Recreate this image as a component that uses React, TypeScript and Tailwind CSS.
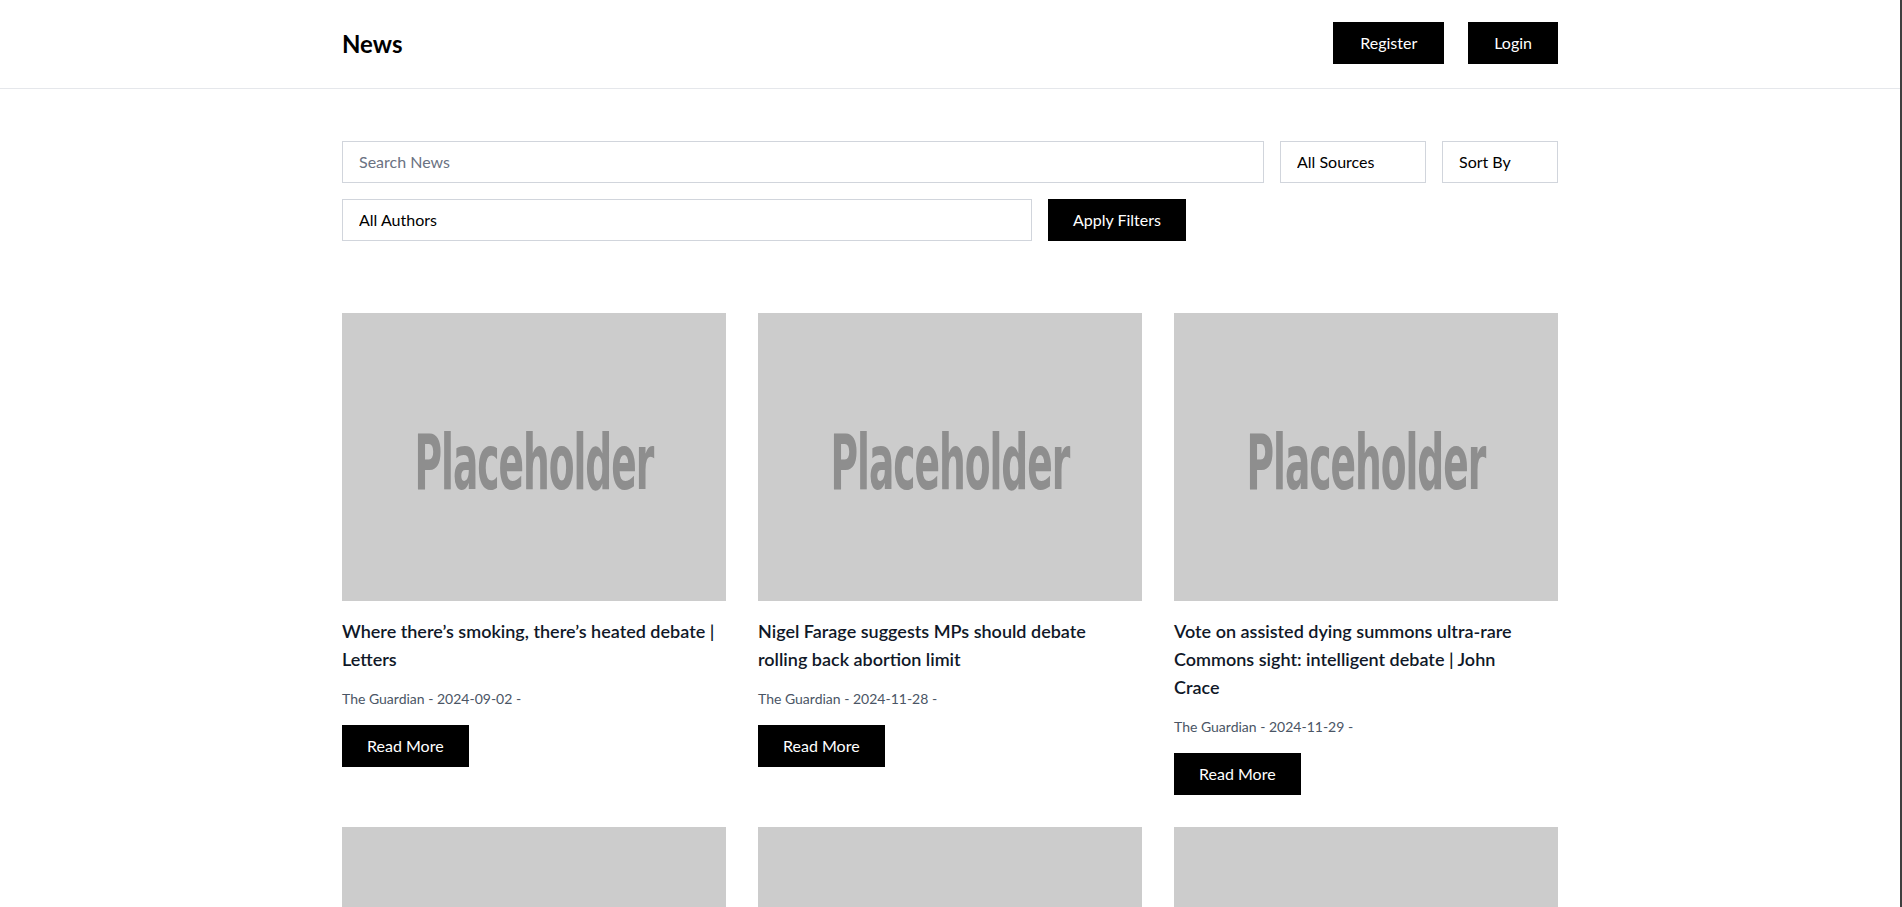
const articles = [
  {
    lines: ["Where there’s smoking, there’s heated debate |", "Letters"],
    source: "The Guardian",
    date: "2024-09-02",
  },
  {
    lines: ["Nigel Farage suggests MPs should debate", "rolling back abortion limit"],
    source: "The Guardian",
    date: "2024-11-28",
  },
  {
    lines: ["Vote on assisted dying summons ultra-rare", "Commons sight: intelligent debate | John", "Crace"],
    source: "The Guardian",
    date: "2024-11-29",
  },
  {
    lines: ["The week in politics: what the budget", "debate means for you"],
    source: "The Guardian",
    date: "2024-10-31",
  },
  {
    lines: ["Debate over school phone bans heats up", "across the country"],
    source: "The Guardian",
    date: "2024-09-15",
  },
  {
    lines: ["Heated debate as council votes on new", "housing plans"],
    source: "The Guardian",
    date: "2024-11-12",
  },
];

function Placeholder() {
  return (
    <div className="h-72 w-full bg-[#cccccc] flex items-center justify-center overflow-hidden">
      <span className="pt-3 text-[76px] font-bold leading-none text-[#8e8e8e] scale-x-[0.55] font-['Liberation_Sans_Narrow','DejaVu_Sans_Condensed',sans-serif] tracking-tight">
        Placeholder
      </span>
    </div>
  );
}

export default function App() {
  return (
    <div className="min-h-screen bg-white text-black border-r-2 border-[#3f3f3f] font-['Lato','Open_Sans',sans-serif]">
      <header className="border-b border-gray-200">
        <div className="mx-auto max-w-7xl px-8 h-[88px] flex items-center justify-between">
          <h1 className="text-2xl font-bold">News</h1>
          <div className="flex gap-6 -mt-0.5">
            <button className="bg-black text-white px-[27px] py-[9px] text-base leading-6">Register</button>
            <button className="bg-black text-white px-[26px] py-[9px] text-base leading-6">Login</button>
          </div>
        </div>
      </header>

      <main className="mx-auto max-w-7xl px-8 pt-[52px]">
        {/* Filters */}
        <div className="flex flex-col gap-4">
          <div className="flex gap-4">
            <input
              type="text"
              placeholder="Search News"
              className="flex-1 border border-gray-300 px-4 py-2 text-base leading-6 placeholder:text-gray-500 outline-none"
            />
            <select className="appearance-none w-[146px] border border-gray-300 px-4 py-2 text-base leading-6 bg-white">
              <option>All Sources</option>
            </select>
            <select className="appearance-none w-[116px] border border-gray-300 px-4 py-2 text-base leading-6 bg-white">
              <option>Sort By</option>
            </select>
          </div>
          <div className="flex gap-4">
            <select className="appearance-none w-[690px] border border-gray-300 px-4 py-2 text-base leading-6 bg-white">
              <option>All Authors</option>
            </select>
            <button className="bg-black text-white px-[25px] py-[9px] text-base leading-6">Apply Filters</button>
          </div>
        </div>

        {/* Articles */}
        <div className="mt-[72px] grid grid-cols-3 gap-8 pb-12">
          {articles.map((a) => (
            <div key={a.date} className="flex flex-col items-start">
              <Placeholder />
              <h2 className="mt-4 text-lg leading-7 font-semibold text-gray-900">
                {a.lines.map((l, i) => (
                  <span key={i} className="block">
                    {l}
                  </span>
                ))}
              </h2>
              <p className="mt-4 text-sm leading-5 text-gray-600">
                {a.source} - {a.date} -
              </p>
              <button className="mt-4 bg-black text-white px-[25px] py-[9px] text-base leading-6">Read More</button>
            </div>
          ))}
        </div>
      </main>
    </div>
  );
}
